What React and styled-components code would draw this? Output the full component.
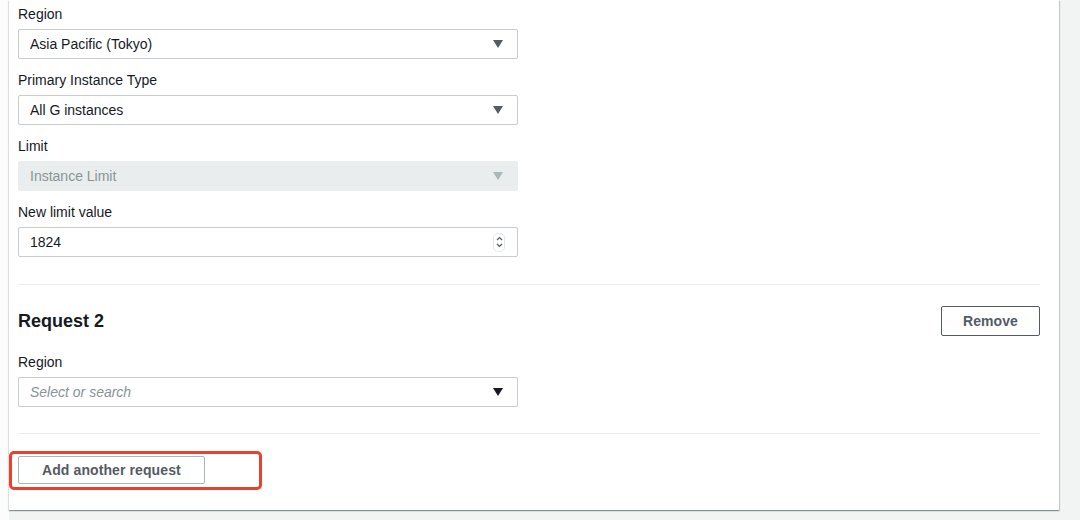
import React from 'react';
import styled, { createGlobalStyle } from 'styled-components';

const GlobalStyle = createGlobalStyle`
  html, body {
    margin: 0;
    padding: 0;
  }
  body {
    background: linear-gradient(to right, #fcfcfc 9px, #f2f3f3 9px);
    font-family: "Liberation Sans", Arial, sans-serif;
    color: #16191f;
    -webkit-font-smoothing: antialiased;
  }
`;

const Page = styled.div`
  width: 1080px;
  height: 520px;
  padding-left: 9px;
  box-sizing: border-box;
`;

const Card = styled.section`
  width: 1050px;
  box-sizing: border-box;
  background: #ffffff;
  padding: 3px 19px 26px 9px;
  box-shadow: 0 1px 1px 0 rgba(0, 28, 36, 0.3), 1px 1px 1px 0 rgba(0, 28, 36, 0.15),
    -1px 1px 1px 0 rgba(0, 28, 36, 0.08);
`;

const Field = styled.div`
  width: 500px;
  margin-top: ${({ $top }) => $top ?? 10}px;
`;

const Label = styled.label`
  display: block;
  font-size: 14px;
  line-height: 22px;
  color: #16191f;
  margin-bottom: 4px;
`;

const Control = styled.div`
  display: flex;
  align-items: center;
  justify-content: space-between;
  height: 30px;
  box-sizing: border-box;
  padding: 0 12px 0 11px;
  border: 1px solid ${({ $disabled }) => ($disabled ? '#eaeded' : '#c7cdce')};
  border-radius: 2px;
  background: ${({ $disabled }) => ($disabled ? '#eaeded' : '#ffffff')};
  font-size: 14px;
  color: ${({ $disabled, $placeholder }) => ($disabled || $placeholder ? '#879596' : '#16191f')};
  font-style: ${({ $placeholder }) => ($placeholder ? 'italic' : 'normal')};
`;

const Caret = styled.span`
  width: 0;
  height: 0;
  margin-right: 2px;
  border-left: 5.5px solid transparent;
  border-right: 5.5px solid transparent;
  border-top: 8px solid ${({ $color }) => $color || '#545b64'};
`;

const Spinner = styled.span`
  display: flex;
  flex-direction: column;
  align-items: center;
  justify-content: center;
  width: 10px;
  height: 17px;
  border: 1px solid #e4e7e8;
  border-radius: 5px;
`;

const Divider = styled.hr`
  border: none;
  border-top: 1px solid #eaeded;
  margin: ${({ $top }) => $top}px 0 0;
  height: 0;
`;

const HeaderRow = styled.div`
  display: flex;
  align-items: center;
  justify-content: space-between;
  height: 30px;
  margin-top: 21px;
`;

const Heading = styled.h2`
  margin: 0;
  font-size: 18px;
  font-weight: 700;
  color: #16191f;
`;

const Button = styled.button`
  height: ${({ $h }) => $h || 30}px;
  padding: 0 ${({ $px }) => $px || 20}px;
  background: #ffffff;
  border: 1px solid ${({ $light }) => ($light ? '#aab7b8' : '#545b64')};
  border-radius: 2px;
  font-family: "Liberation Sans", Arial, sans-serif;
  font-size: 14px;
  font-weight: 700;
  color: #545b64;
  letter-spacing: 0.1px;
`;

const ActionRow = styled.div`
  margin-top: 22px;
  display: flex;
`;

const Highlight = styled.div`
  position: relative;
  &::after {
    content: '';
    position: absolute;
    left: -9px;
    top: -5px;
    width: 253px;
    height: 39px;
    box-sizing: border-box;
    border: 3px solid #e9412b;
    border-radius: 5px;
    pointer-events: none;
  }
`;

const SelectField = ({ label, value, disabled, placeholder, top }) => (
  <Field $top={top}>
    <Label>{label}</Label>
    <Control $disabled={disabled} $placeholder={placeholder}>
      <span>{value}</span>
      <Caret $color={disabled ? '#aab7b8' : placeholder ? '#16191f' : '#545b64'} />
    </Control>
  </Field>
);

const NumberField = ({ label, value }) => (
  <Field>
    <Label>{label}</Label>
    <Control>
      <span>{value}</span>
      <Spinner>
        <svg width="7" height="14" viewBox="0 0 7 14" fill="none" stroke="#545b64" strokeWidth="1.2">
          <path d="M1 5 L3.5 2.5 L6 5" />
          <path d="M1 9 L3.5 11.5 L6 9" />
        </svg>
      </Spinner>
    </Control>
  </Field>
);

export default function App() {
  return (
    <>
      <GlobalStyle />
      <Page>
        <Card>
          <SelectField label="Region" value="Asia Pacific (Tokyo)" top={0} />
          <SelectField label="Primary Instance Type" value="All G instances" />
          <SelectField label="Limit" value="Instance Limit" disabled />
          <NumberField label="New limit value" value="1824" />
          <Divider $top={27} />
          <HeaderRow>
            <Heading>Request 2</Heading>
            <Button $px={21}>Remove</Button>
          </HeaderRow>
          <SelectField label="Region" value="Select or search" placeholder top={15} />
          <Divider $top={26} />
          <ActionRow>
            <Highlight>
              <Button $h={28} $px={23} $light>Add another request</Button>
            </Highlight>
          </ActionRow>
        </Card>
      </Page>
    </>
  );
}
